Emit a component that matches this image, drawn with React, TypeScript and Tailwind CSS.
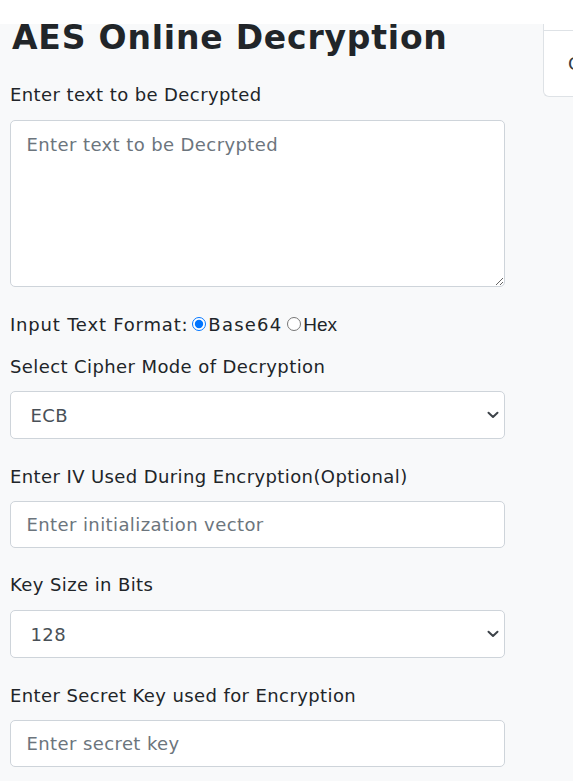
import React from "react";

function Chevron() {
  return (
    <svg
      className="pointer-events-none absolute right-[6px] top-1/2 -translate-y-1/2"
      width="12"
      height="8"
      viewBox="0 0 12 8"
      fill="none"
    >
      <path d="M1.5 1.8l4.5 4.2l4.5-4.2" stroke="#3d4349" strokeWidth="2" strokeLinecap="round" strokeLinejoin="round" />
    </svg>
  );
}

function Select({ value }: { value: string }) {
  return (
    <div className="relative">
      <select
        defaultValue={value}
        className="block h-[48px] w-full appearance-none rounded-[5px] border border-[#ced4da] bg-white pl-[19.5px] text-[18px] tracking-[0.4px] text-[#495057] outline-none"
      >
        <option>{value}</option>
      </select>
      <Chevron />
    </div>
  );
}

function Label({ children, className = "mb-[11px]" }: { children: React.ReactNode; className?: string }) {
  return <label className={`block text-[18px] leading-[27px] tracking-[0.4px] text-[#212529] ${className}`}>{children}</label>;
}

const inputCls =
  "block h-[47px] w-full rounded-[5px] border border-[#ced4da] bg-white px-[15.5px] text-[18px] tracking-[0.4px] text-[#495057] outline-none placeholder:text-[#6c757d]";

export default function App() {
  return (
    <div className="relative min-h-[781px] overflow-hidden bg-[#f8f9fa] [font-family:'DejaVu_Sans',sans-serif] text-[#212529]">
      <div className="absolute left-0 right-0 top-0 z-10 h-[24px] bg-white" />
      <div className="flex">
        <main className="ml-[10px] w-[495px] shrink-0 pt-[18px]">
          <h1 className="ml-[2px] text-[33px] font-bold leading-[40px] tracking-[0.8px] text-[#212529]">AES Online Decryption</h1>
          <div className="mt-[23px]">
            <Label className="mb-[12px]">Enter text to be Decrypted</Label>
            <textarea
              placeholder="Enter text to be Decrypted"
              className="block h-[167px] w-full rounded-[5px] border border-[#ced4da] bg-white px-[15.5px] pt-[10px] text-[18px] leading-[27px] tracking-[0.4px] text-[#495057] outline-none placeholder:text-[#6c757d]"
            />
          </div>
          <div className="mt-[24px] flex items-center text-[18px] leading-[27px]">
            <span className="tracking-[0.8px]">Input Text Format:</span>
            <input type="radio" name="fmt" defaultChecked className="mb-[2px] ml-[4px] mr-[2px] h-[14px] w-[14px]" />
            <span className="tracking-[1.2px]">Base64</span>
            <input type="radio" name="fmt" className="mb-[2px] ml-[5px] mr-[2px] h-[14px] w-[14px]" />
            <span className="text-[19px] [font-family:'Liberation_Sans',Arial,sans-serif]">Hex</span>
          </div>
          <div className="mt-[15px]">
            <Label>Select Cipher Mode of Decryption</Label>
            <Select value="ECB" />
          </div>
          <div className="mt-[24px]">
            <Label>Enter IV Used During Encryption(Optional)</Label>
            <input placeholder="Enter initialization vector" className={inputCls} />
          </div>
          <div className="mt-[23px]">
            <Label className="mb-[12px]">Key Size in Bits</Label>
            <Select value="128" />
          </div>
          <div className="mt-[24px]">
            <Label>Enter Secret Key used for Encryption</Label>
            <input placeholder="Enter secret key" className={inputCls} />
          </div>
        </main>
        <aside className="ml-[38px] flex w-[200px] shrink-0 flex-col">
          <div className="h-[31px] border-b border-l border-[#dee2e6] bg-white" />
          <div className="flex h-[66px] items-center rounded-bl-[6px] border-b border-l border-[#dee2e6] bg-white pl-[24px] text-[18px] text-[#343a40]">
            Copy
          </div>
        </aside>
      </div>
    </div>
  );
}
